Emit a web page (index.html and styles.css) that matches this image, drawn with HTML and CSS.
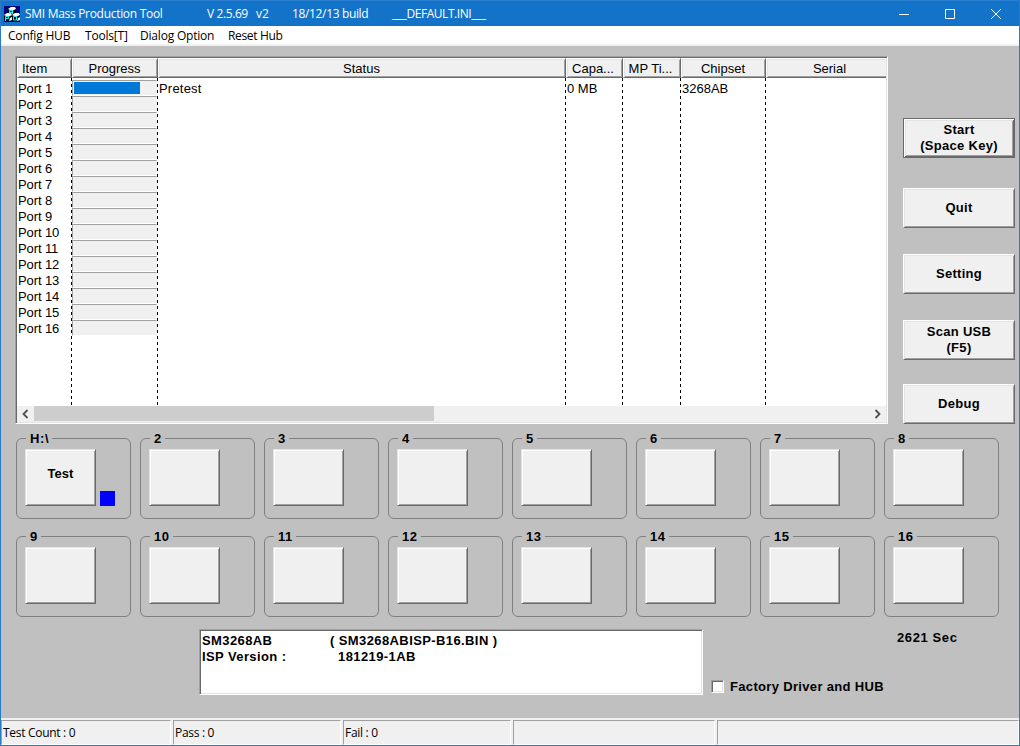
FILE: index.html
```html
<!DOCTYPE html>
<html lang="en">

<head>
  <meta charset="UTF-8">
  <meta name="viewport" content="width=device-width, initial-scale=1.0">
  <title>SMI Mass Production Tool</title>
  <link rel="stylesheet" href="styles.css">
</head>

<body>

  <div class="window">
    <div class="titlebar">
      <svg class="app-icon" width="16" height="16" viewBox="0 0 16 16">
        <rect width="16" height="16" fill="#000080"/>
        <path fill="#000" d="M4 3l4 1v5l-4-1zM8 4l4-1v5l-4 1zM0 9l4 1v5l-4-1zM4 10l4-1v5l-4 1zM8 9l4 1v5l-4-1zM12 10l4-1v5l-4 1z"/>
        <path fill="#fff" d="M4 3l3-2h4l1 2-4 2zM0 9l3-2h4l1 2-4 2zM8 9l3-2h4l1 2-4 2zM6 12l2-1v3l-3 1zM14 12l2-1v3l-3 1z"/>
        <path fill="none" stroke="#0ff" d="M5.5 8V4.500h3V8M5.500 6.500h3M1.500 15v-4.500h3v2h-3M9.500 10.500h3v3.500h-3z"/>
      </svg>
      <span class="title-name">SMI Mass Production Tool</span>
      <span class="title-version">V 2.5.69</span>
      <span class="title-rev">v2</span>
      <span class="title-build">18/12/13 build</span>
      <span class="title-ini">___DEFAULT.INI___</span>
      <div class="controls">
        <svg width="10" height="10" viewBox="0 0 10 10"><path d="M0 5.5h10"/></svg>
        <svg width="10" height="10" viewBox="0 0 10 10"><path d="M.5.5h9v9h-9z"/></svg>
        <svg width="10" height="10" viewBox="0 0 10 10"><path d="M0 0l10 10M10 0L0 10"/></svg>
      </div>
    </div>

    <div class="menu">
      <span class="menu-config">Config HUB</span>
      <span class="menu-tools">Tools[T]</span>
      <span class="menu-dialog">Dialog Option</span>
      <span class="menu-reset">Reset Hub</span>
    </div>

    <div class="client">
      <div class="top">
        <div class="list">
          <div class="columns">
            <div class="column item"><div class="head">Item</div></div>
            <div class="column progress"><div class="head">Progress</div></div>
            <div class="column status"><div class="head">Status</div><div class="cell">Pretest</div></div>
            <div class="column capacity"><div class="head">Capa...</div><div class="cell">0 MB</div></div>
            <div class="column time"><div class="head">MP Ti...</div></div>
            <div class="column chipset"><div class="head">Chipset</div><div class="cell">3268AB</div></div>
            <div class="column serial"><div class="head">Serial</div></div>
          </div>
          <div class="scrollbar">
            <svg width="17" height="16" viewBox="0 0 17 16"><path d="M10.500 4L6.500 8l4 4"/></svg>
            <div class="thumb"></div>
            <svg class="right" width="17" height="16" viewBox="0 0 17 16"><path d="M6.500 4l4 4-4 4"/></svg>
          </div>
        </div>

        <div class="actions">
          <button class="button default">Start<br>(Space Key)</button>
          <button class="button">Quit</button>
          <button class="button">Setting</button>
          <button class="button">Scan USB<br>(F5)</button>
          <button class="button">Debug</button>
        </div>
      </div>

      <div class="slots"></div>

      <div class="bottom">
        <div class="info">
          <div class="info-line"><span class="info-key">SM3268AB</span><span class="info-file">( SM3268ABISP-B16.BIN )</span></div>
          <div class="info-line"><span class="info-key">ISP Version :</span><span class="info-version">181219-1AB</span></div>
        </div>
        <div class="options">
          <div class="elapsed">2621 Sec</div>
          <label class="factory"><span class="checkbox"></span><span class="factory-text">Factory Driver and HUB</span></label>
        </div>
      </div>
    </div>

    <div class="statusbar">
      <div class="pane">Test Count : 0</div>
      <div class="pane">Pass : 0</div>
      <div class="pane">Fail : 0</div>
      <div class="pane wide"></div>
      <div class="pane last"></div>
    </div>
  </div>

  <script src="main.js"></script>

</body>

</html>
```
FILE: styles.css
```css
* {
  box-sizing: border-box;
  margin: 0;
  padding: 0;
}

body {
  width: 1020px;
  height: 746px;
  overflow: hidden;
  font: 13px/16px "Liberation Sans", sans-serif;
  color: #000;
}

.window {
  display: flex;
  flex-direction: column;
  height: 746px;
  border: 1px solid #2a7ac6;
  border-top: 0;
}

/* title bar */
.titlebar {
  flex: none;
  display: flex;
  align-items: center;
  height: 26px;
  padding-left: 3px;
  background: #1373c9;
  border-top: 1px solid #2a7fd0;
  color: #fff;
  font: 12px/16px "Open Sans", sans-serif;
  white-space: pre;
}

.app-icon {
  margin-right: 5px;
}

.title-name {
  width: 182px;
  letter-spacing: -0.3px;
}

.title-version {
  width: 49px;
  letter-spacing: -0.4px;
}

.title-rev {
  width: 36px;
}

.title-build {
  width: 100px;
  letter-spacing: -0.35px;
}

.title-ini {
  letter-spacing: -0.45px;
}

.controls {
  display: flex;
  gap: 36px;
  margin-left: auto;
  margin-right: 18px;
}

.controls path {
  fill: none;
  stroke: #fff;
}

/* menu */
.menu {
  flex: none;
  display: flex;
  height: 20px;
  padding-left: 7px;
  background: #fff;
  border-bottom: 2px solid #f0f0f0;
  font: 12px/19px "Open Sans", sans-serif;
  letter-spacing: -0.2px;
  white-space: nowrap;
}

.menu-config {
  width: 77px;
}

.menu-tools {
  width: 55px;
}

.menu-dialog {
  width: 88px;
}

.menu-reset {
  letter-spacing: -0.35px;
}

/* client area */
.client {
  flex: 1;
  padding: 10px 4px 0 14px;
  background: #c0c0c0;
}

.top {
  display: flex;
  justify-content: space-between;
}

.list {
  width: 873px;
  height: 368px;
  border: 1px solid;
  border-color: #a0a0a0 #fff #fff #a0a0a0;
  background: #fff;
}

.list,
.info {
  box-shadow: inset 1px 1px #696969, inset -1px -1px #e3e3e3;
  padding: 1px;
}

.columns {
  display: flex;
  height: 348px;
  overflow: hidden;
}

.column {
  flex: none;
  background: repeating-linear-gradient(#000 0 3px, transparent 3px 6px) right 20px / 1px 100% no-repeat;
}

.item {
  width: 55px;
}

.progress {
  width: 86px;
}

.status {
  width: 408px;
}

.capacity {
  width: 57px;
}

.time {
  width: 58px;
}

.chipset {
  width: 85px;
}

.serial {
  width: 128px;
}

.head {
  height: 20px;
  margin-bottom: 2px;
  padding-right: 1px;
  border: 1px solid;
  border-color: #fff #696969 #696969 #fff;
  box-shadow: inset 1px 1px #e3e3e3, inset -1px -1px #a0a0a0;
  background: #f0f0f0;
  line-height: 20px;
  text-align: center;
  white-space: nowrap;
}

.item .head {
  padding-left: 4px;
  text-align: left;
}

.capacity .head,
.time .head {
  padding-right: 3px;
}

.cell {
  height: 16px;
  padding-left: 1px;
  line-height: 17px;
  white-space: nowrap;
}

.item .cell {
  letter-spacing: -0.1px;
}

.status .cell {
  letter-spacing: 0.2px;
}

.bar {
  height: 16px;
  width: 85px;
  padding: 1px;
  border: 1px solid;
  border-color: #a0a0a0 #f0f0f0 #fff #a0a0a0;
  background: #f0f0f0;
}

.fill {
  height: 12px;
  background: #0078d7;
}

.scrollbar {
  display: flex;
  height: 16px;
  background: #f0f0f0;
}

.scrollbar path {
  fill: none;
  stroke: #505050;
  stroke-width: 1.8;
}

.scrollbar .right {
  margin-left: auto;
}

.thumb {
  width: 400px;
  height: 15px;
  background: #cdcdcd;
}

/* buttons */
.button {
  border: 1px solid;
  border-color: #fff #696969 #696969 #fff;
  border-radius: 0;
  box-shadow: inset 1px 1px #e3e3e3, inset -1px -1px #a0a0a0;
  background: #f0f0f0;
  color: #000;
  font: bold 13px/16px "Liberation Sans", sans-serif;
}

.actions {
  display: flex;
  flex-direction: column;
  width: 112px;
  height: 368px;
  padding-top: 62px;
}

.actions .button {
  flex: none;
  height: 40px;
  margin-bottom: 26px;
  letter-spacing: 0.3px;
}

.actions .default {
  margin-bottom: 30px;
  border-color: #696969;
  box-shadow: inset 1px 1px #fff, inset -1px -1px #696969, inset 2px 2px #e3e3e3, inset -2px -2px #a0a0a0;
}

.actions .button:nth-child(4) {
  margin-bottom: 24px;
}

.actions .button:last-child {
  margin-bottom: 0;
}

/* port slots */
.slots {
  display: grid;
  grid-template-columns: repeat(8, 115px);
  gap: 9px;
  margin: 6px 0 0 1px;
}

.slot {
  display: flex;
  align-items: flex-end;
  gap: 4px;
  height: 89px;
  padding: 0 0 12px 8px;
  border: 1px solid #808080;
  border-radius: 6px;
}

.slot legend {
  height: 16px;
  padding: 0 3px 0 4px;
  margin-left: 1px;
  font-weight: bold;
  line-height: 18px;
  letter-spacing: 0.6px;
}

.slot .button {
  width: 71px;
  height: 57px;
  padding-bottom: 7px;
  border-color: #e3e3e3 #696969 #696969 #e3e3e3;
  box-shadow: inset 1px 1px #fff, inset -1px -1px #a0a0a0;
}

.led {
  width: 15px;
  height: 15px;
  background: #00f;
}

/* firmware info */
.bottom {
  display: flex;
  margin: 12px 0 0 184px;
  font-weight: bold;
}

.info {
  width: 504px;
  height: 66px;
  padding: 3px 2px;
  border: 1px solid;
  border-color: #a0a0a0 #fff #fff #a0a0a0;
  background: #fff;
}

.info-line {
  display: flex;
  letter-spacing: 0.4px;
  white-space: nowrap;
}

.info-key {
  width: 128px;
}

.info-version {
  margin-left: 8px;
}

.options {
  padding-left: 8px;
}

.elapsed {
  margin-left: 186px;
  line-height: 18px;
  letter-spacing: 0.6px;
}

.factory {
  display: flex;
  align-items: center;
  gap: 6px;
  margin-top: 29px;
  line-height: 18px;
  letter-spacing: 0.33px;
}

.checkbox {
  width: 13px;
  height: 13px;
  border: 1px solid;
  border-color: #a0a0a0 #fff #fff #a0a0a0;
  box-shadow: inset 1px 1px #696969, inset -1px -1px #e3e3e3;
  background: #fff;
}

.factory-text {
  padding-top: 2px;
}

/* status bar */
.statusbar {
  flex: none;
  display: flex;
  gap: 2px;
  height: 27px;
  padding-top: 2px;
  background: #f0f0f0;
  font: 12px/23px "Open Sans", sans-serif;
  letter-spacing: -0.3px;
}

.pane {
  width: 170px;
  padding-left: 1px;
  border: 1px solid;
  border-color: #a0a0a0 #fff #fff #a0a0a0;
}

.pane:nth-child(2),
.pane:nth-child(3) {
  width: 168px;
}

.pane.wide {
  width: 202px;
}

.pane.last {
  flex: 1;
}
```
FILE: main.js
```js
let $item = document.querySelector('.item')
let $progress = document.querySelector('.progress')
let $slots = document.querySelector('.slots')

for (let i = 1; i <= 16; i++) {
  let first = i === 1
  $item.insertAdjacentHTML('beforeend', `<div class="cell">Port ${i}</div>`)
  $progress.insertAdjacentHTML('beforeend',
    `<div class="bar">${first ? '<div class="fill" style="width: 66px"></div>' : ''}</div>`)
  $slots.insertAdjacentHTML('beforeend', `
    <fieldset class="slot">
      <legend>${first ? 'H:\\' : i}</legend>
      <button class="button">${first ? 'Test' : ''}</button>
      ${first ? '<span class="led"></span>' : ''}
    </fieldset>`)
}
```
